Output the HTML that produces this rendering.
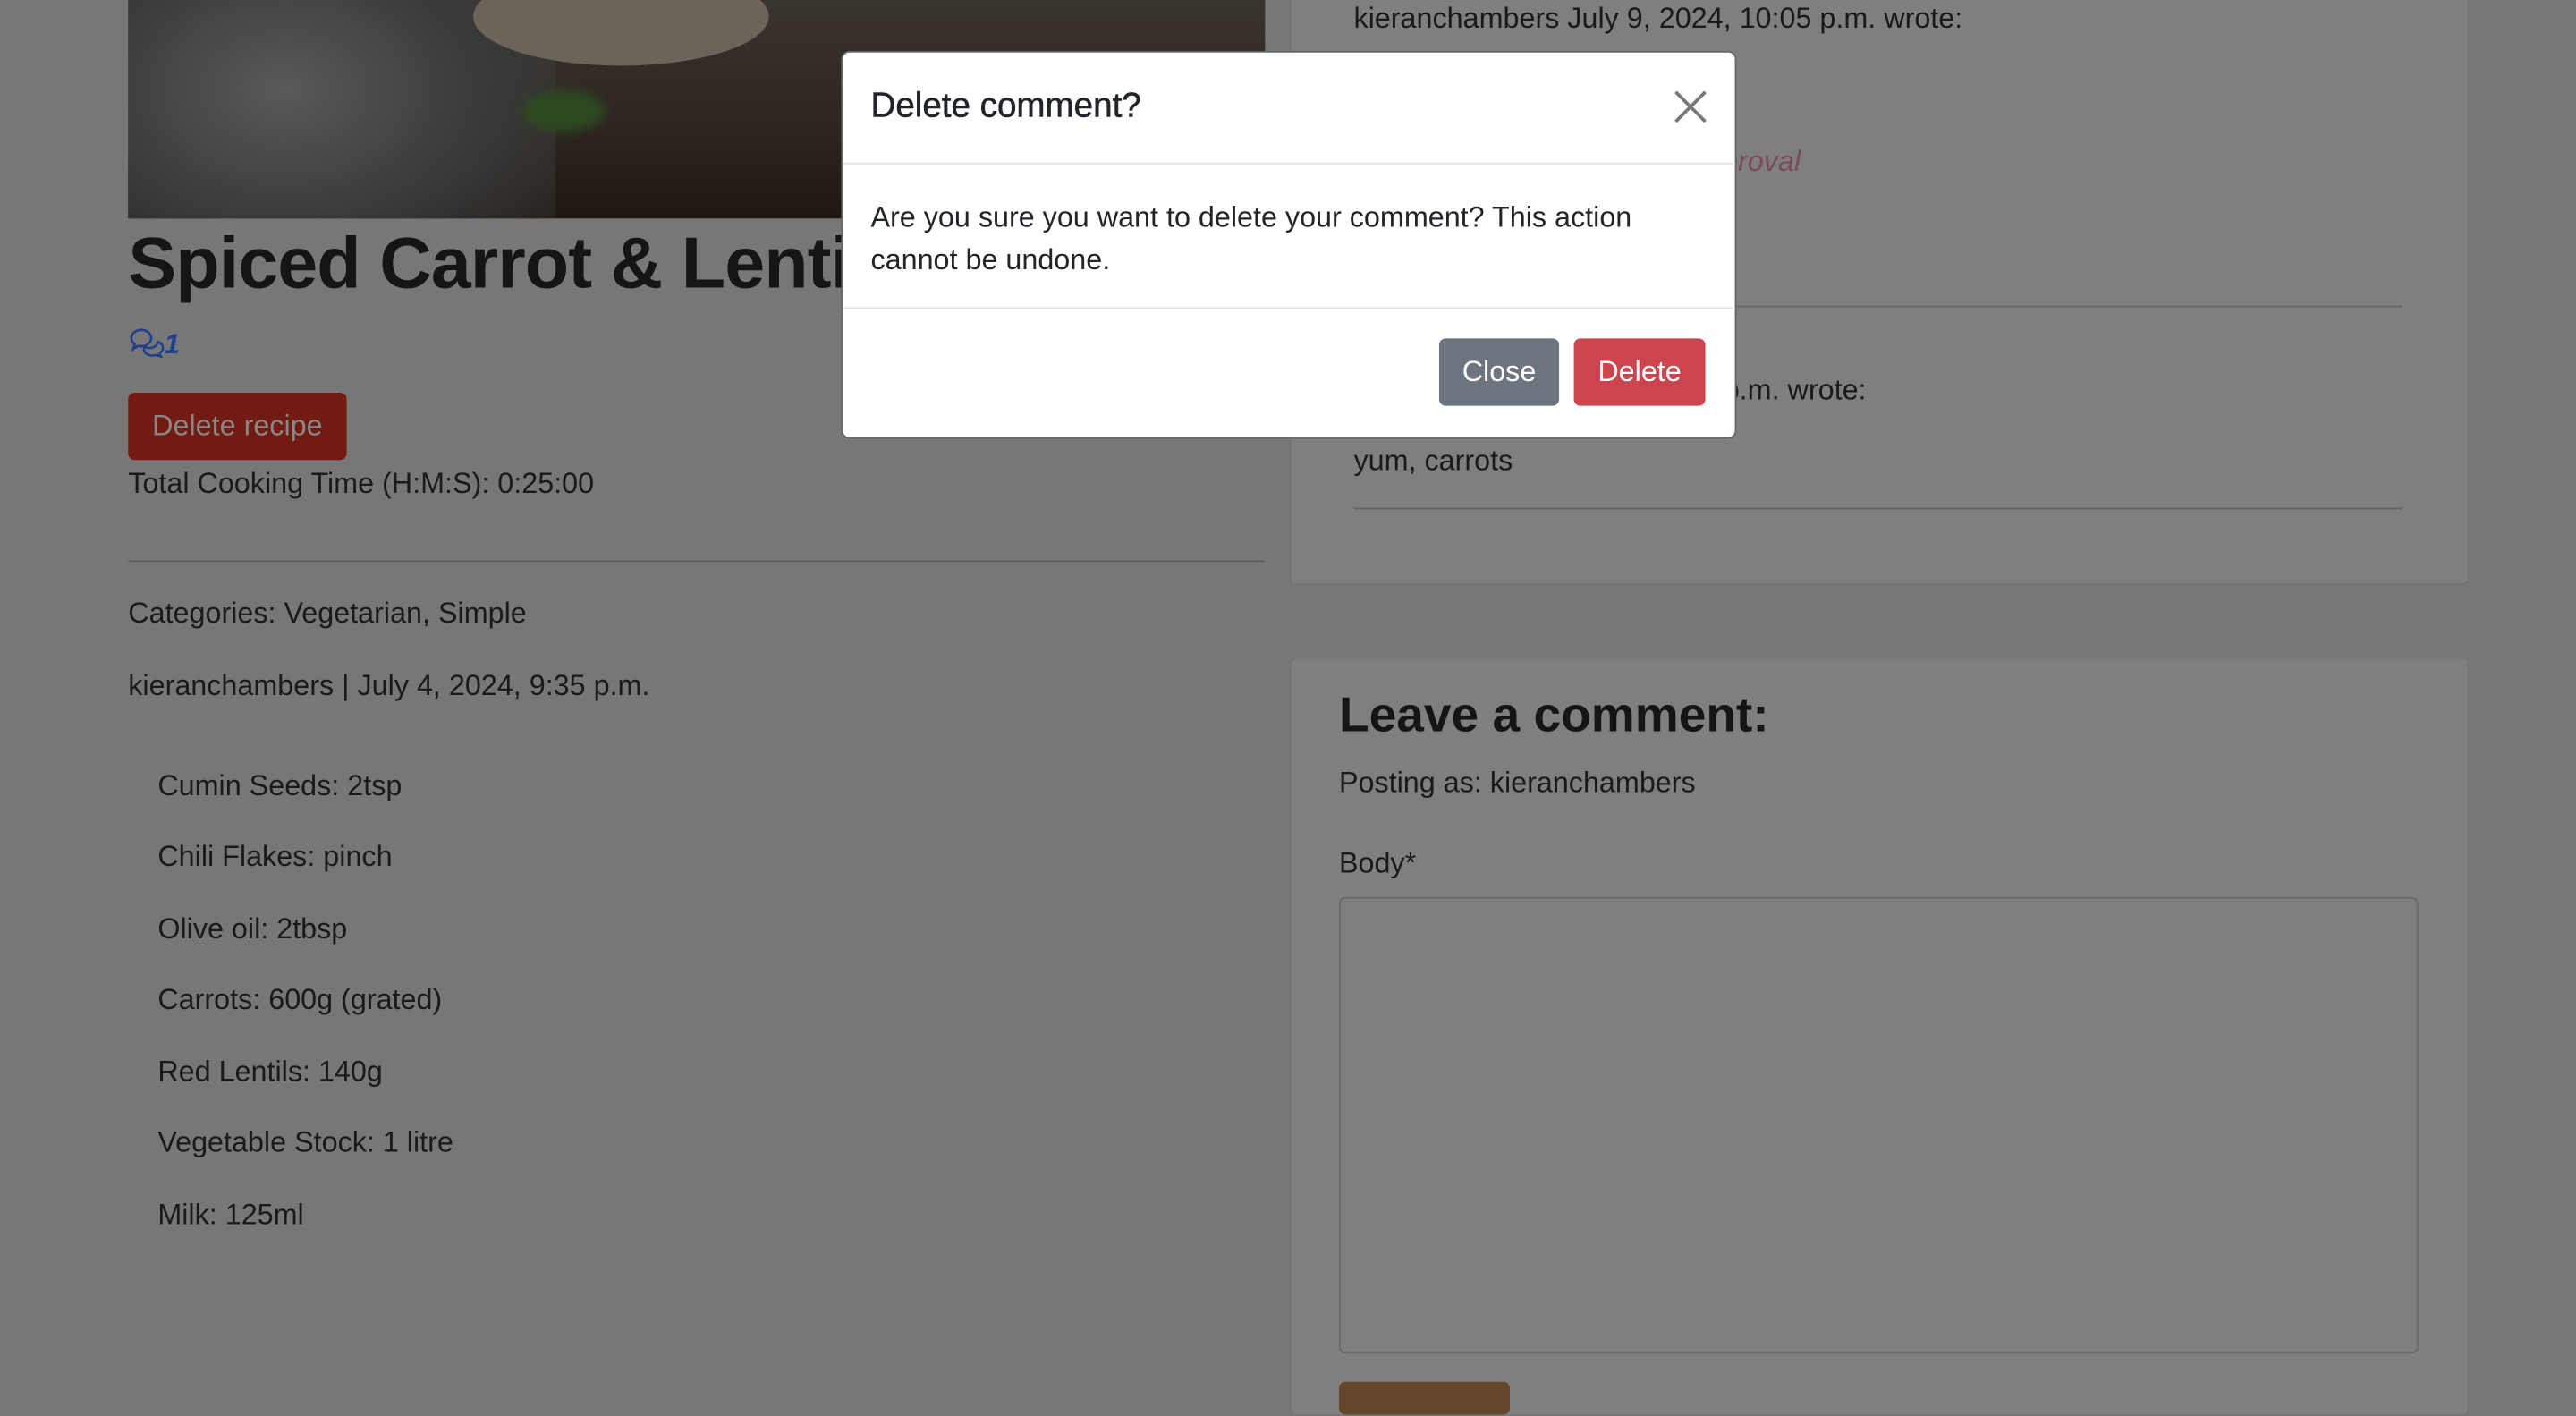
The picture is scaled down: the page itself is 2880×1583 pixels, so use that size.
<!DOCTYPE html>
<html><head><meta charset="utf-8"><style>
html,body{margin:0;padding:0;width:2880px;height:1558px;overflow:hidden;background:#777;}
#w{position:absolute;left:0;top:0;width:1568px;height:848px;transform:scale(1.836735);transform-origin:0 0;font-family:"Liberation Sans",Arial,sans-serif;color:#1a1a1a;}
.a{position:absolute;white-space:nowrap;}
.t{font-size:17.6px;}
</style></head><body><div id="w">
<div class="a" style="left:78px;top:0;width:692px;height:133px;background:linear-gradient(180deg,#3a342e 0%,#2e2720 55%,#1f1812 100%);overflow:hidden">
 <div style="position:absolute;left:-40px;top:-40px;width:300px;height:210px;background:radial-gradient(ellipse at 45% 45%,#5a5a5a 0%,#3a3a3a 50%,rgba(40,36,32,0) 100%)"></div>
 <div style="position:absolute;left:210px;top:-20px;width:180px;height:60px;border-radius:50%;background:#6b645b"></div>
 <div style="position:absolute;left:240px;top:55px;width:50px;height:25px;border-radius:50%;background:#2d4a22;filter:blur(3px)"></div>
</div>
<div class="a" style="left:78px;top:136px;font-size:44px;font-weight:bold;color:#151515;letter-spacing:-0.5px">Spiced Carrot &amp; Lentil Soup</div>
<div class="a" style="left:78px;top:198px;color:#1e3f8a;font-size:17px;font-style:italic;font-weight:bold">
<svg width="22" height="20" viewBox="0 0 22 20" style="vertical-align:-3px"><path d="M2 8a6 5 0 1 1 4 4.5l-3 2 1-3A5 5 0 0 1 2 8zM10 13a5 4 0 0 0 8-3a5 4 0 0 1 1 7l1 2-3-1a5 4 0 0 1-7-5" fill="none" stroke="#1e3f8a" stroke-width="1.4"/></svg>1</div>
<div class="a" style="left:78px;top:239px;width:133px;height:41px;background:#731a13;border-radius:4px;color:#888;font-size:17.6px;line-height:41px;text-align:center">Delete recipe</div>
<div class="a t" style="left:78px;top:284px">Total Cooking Time (H:M:S): 0:25:00</div>
<div class="a" style="left:78px;top:341px;width:692px;height:1px;background:#5e5e5e"></div>
<div class="a t" style="left:78px;top:363px">Categories: Vegetarian, Simple</div>
<div class="a t" style="left:78px;top:407px">kieranchambers | July 4, 2024, 9:35 p.m.</div>
<div class="a t" style="left:96px;top:468px">Cumin Seeds: 2tsp</div>
<div class="a t" style="left:96px;top:511px">Chili Flakes: pinch</div>
<div class="a t" style="left:96px;top:555px">Olive oil: 2tbsp</div>
<div class="a t" style="left:96px;top:598px">Carrots: 600g (grated)</div>
<div class="a t" style="left:96px;top:642px">Red Lentils: 140g</div>
<div class="a t" style="left:96px;top:685px">Vegetable Stock: 1 litre</div>
<div class="a t" style="left:96px;top:729px">Milk: 125ml</div>

<div class="a" style="left:785px;top:-10px;width:716px;height:364px;background:#7f7f7f;border:1px solid #747474;border-radius:4px"></div>
<div class="a t" style="left:824px;top:1px">kieranchambers July 9, 2024, 10:05 p.m. wrote:</div>
<div class="a t" style="right:472px;top:88px;color:#7c4a58;font-style:italic">This comment is awaiting approval</div>
<div class="a" style="left:824px;top:186px;width:638px;height:1px;background:#666"></div>
<div class="a t" style="right:432px;top:227px">kieranchambers July 4, 2024, 9:40 p.m. wrote:</div>
<div class="a t" style="left:824px;top:270px">yum, carrots</div>
<div class="a" style="left:824px;top:309px;width:638px;height:1px;background:#666"></div>

<div class="a" style="left:785px;top:400px;width:716px;height:460px;background:#7f7f7f;border:1px solid #747474;border-radius:4px"></div>
<div class="a" style="left:815px;top:419px;font-size:30px;font-weight:bold;color:#151515">Leave a comment:</div>
<div class="a t" style="left:815px;top:466px">Posting as: kieranchambers</div>
<div class="a t" style="left:815px;top:515px">Body*</div>
<div class="a" style="left:815px;top:546px;width:655px;height:276px;border:1px solid #6a6a6a;border-radius:4px;background:#7f7f7f"></div>
<div class="a" style="left:815px;top:841px;width:104px;height:20px;background:#64462a;border-radius:4px"></div>

<div class="a" style="left:512px;top:31px;width:543px;height:234px;background:#fff;border-radius:5px;border:1px solid #666"></div>
<div class="a" style="left:530px;top:53px;font-size:21px;color:#212529;-webkit-text-stroke:0.3px #212529">Delete comment?</div>
<svg class="a" style="left:1019px;top:55px" width="20" height="20" viewBox="0 0 20 20"><path d="M1 1L19 19M19 1L1 19" stroke="#777" stroke-width="2"/></svg>
<div class="a" style="left:513px;top:99px;width:542px;height:1px;background:#dee2e6"></div>
<div class="a" style="left:530px;top:119px;font-size:17.6px;color:#212529;line-height:26px;white-space:normal;width:500px">Are you sure you want to delete your comment? This action cannot be undone.</div>
<div class="a" style="left:513px;top:187px;width:542px;height:1px;background:#dee2e6"></div>
<div class="a" style="left:876px;top:206px;width:73px;height:41px;background:#6c757d;border-radius:4px;color:#fff;font-size:17.6px;line-height:41px;text-align:center">Close</div>
<div class="a" style="left:958px;top:206px;width:80px;height:41px;background:#cc444d;border-radius:4px;color:#fff;font-size:17.6px;line-height:41px;text-align:center">Delete</div>
</div></body></html>
